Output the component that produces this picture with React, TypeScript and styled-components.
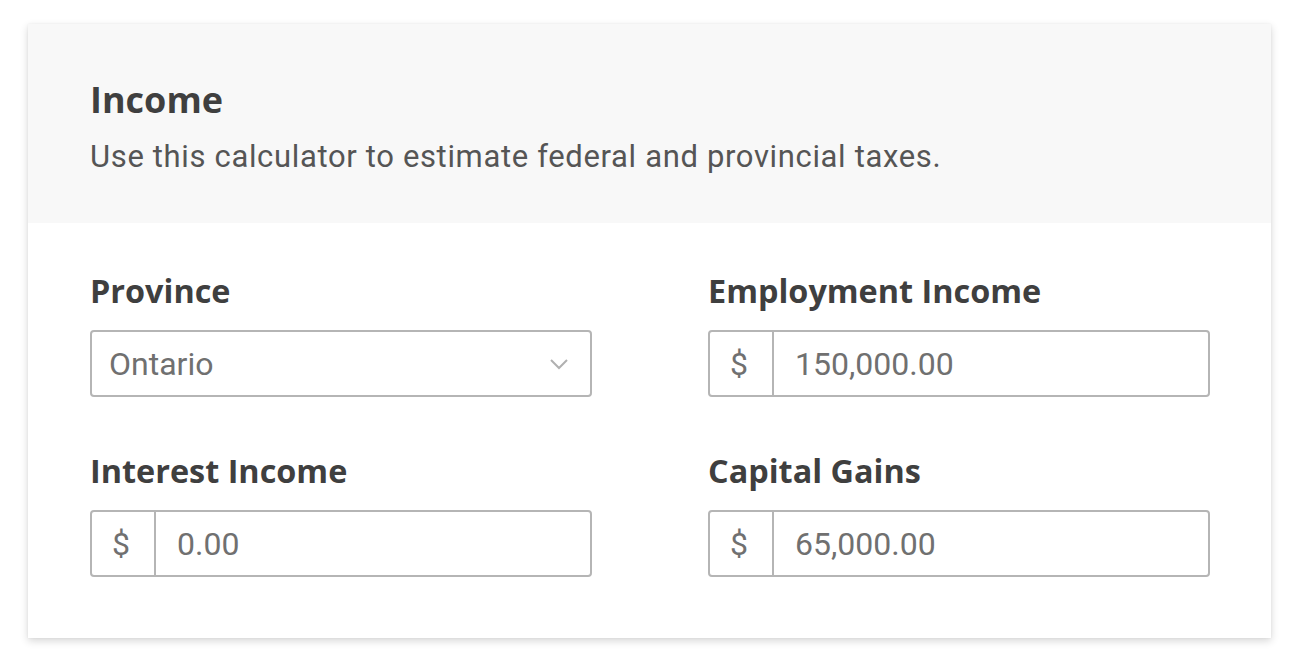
import styled, { createGlobalStyle } from 'styled-components';

const GlobalStyle = createGlobalStyle`
  html, body {
    margin: 0;
    padding: 0;
    background: #ffffff;
  }
  * { box-sizing: border-box; }
`;

const Page = styled.div`
  padding: 24px 0 20px 28px;
`;

const Card = styled.section`
  width: 1243px;
  background: #ffffff;
  box-shadow: 0 3px 8px rgba(0, 0, 0, 0.16), 0 0 2px rgba(0, 0, 0, 0.06);
`;

const Header = styled.header`
  background: #f8f8f8;
  padding: 54px 62px 47px;
`;

const Title = styled.h1`
  margin: 0;
  font-family: 'Open Sans', 'Noto Sans', sans-serif;
  font-weight: 700;
  font-size: 36px;
  line-height: 44px;
  color: #3f3f3f;
`;

const Subtitle = styled.p`
  margin: 15px 0 0;
  font-family: Roboto, 'Noto Sans', sans-serif;
  font-size: 31px;
  letter-spacing: 0.65px;
  line-height: 39px;
  color: #555555;
`;

const Body = styled.div`
  display: grid;
  grid-template-columns: 502px 502px;
  column-gap: 116px;
  row-gap: 53px;
  padding: 47px 62px 61px;
`;

const Field = styled.div`
  display: flex;
  flex-direction: column;
  gap: 20px;
`;

const Label = styled.label`
  font-family: 'Open Sans', 'Noto Sans', sans-serif;
  font-weight: 700;
  font-size: 32.4px;
  line-height: 40px;
  color: #3f3f3f;
`;

const Box = styled.div`
  display: flex;
  align-items: center;
  height: 67px;
  border: 2px solid #b5b5b5;
  border-radius: 4px;
  background: #ffffff;
  font-family: Roboto, 'Noto Sans', sans-serif;
  font-size: 32px;
  color: #707070;
`;

const Prefix = styled.span`
  flex: 0 0 64px;
  align-self: stretch;
  display: flex;
  align-items: center;
  justify-content: center;
  padding-right: 4px;
  border-right: 2px solid #b5b5b5;
`;

const Value = styled.span<{ $pad: number }>`
  flex: 1;
  padding-left: ${(p) => p.$pad}px;
`;

const Chevron = styled.svg`
  width: 20px;
  height: 12px;
  margin-right: 21px;
`;

function SelectField({ label, value }: { label: string; value: string }) {
  return (
    <Field>
      <Label>{label}</Label>
      <Box>
        <Value $pad={17}>{value}</Value>
        <Chevron viewBox="0 0 20 12" fill="none">
          <path d="M2 2l8 8 8-8" stroke="#b0b0b0" strokeWidth="2" />
        </Chevron>
      </Box>
    </Field>
  );
}

function MoneyField({ label, value }: { label: string; value: string }) {
  return (
    <Field>
      <Label>{label}</Label>
      <Box>
        <Prefix>$</Prefix>
        <Value $pad={21}>{value}</Value>
      </Box>
    </Field>
  );
}

export default function App() {
  return (
    <>
      <GlobalStyle />
      <Page>
        <Card>
          <Header>
            <Title>Income</Title>
            <Subtitle>Use this calculator to estimate federal and provincial taxes.</Subtitle>
          </Header>
          <Body>
            <SelectField label="Province" value="Ontario" />
            <MoneyField label="Employment Income" value="150,000.00" />
            <MoneyField label="Interest Income" value="0.00" />
            <MoneyField label="Capital Gains" value="65,000.00" />
          </Body>
        </Card>
      </Page>
    </>
  );
}
